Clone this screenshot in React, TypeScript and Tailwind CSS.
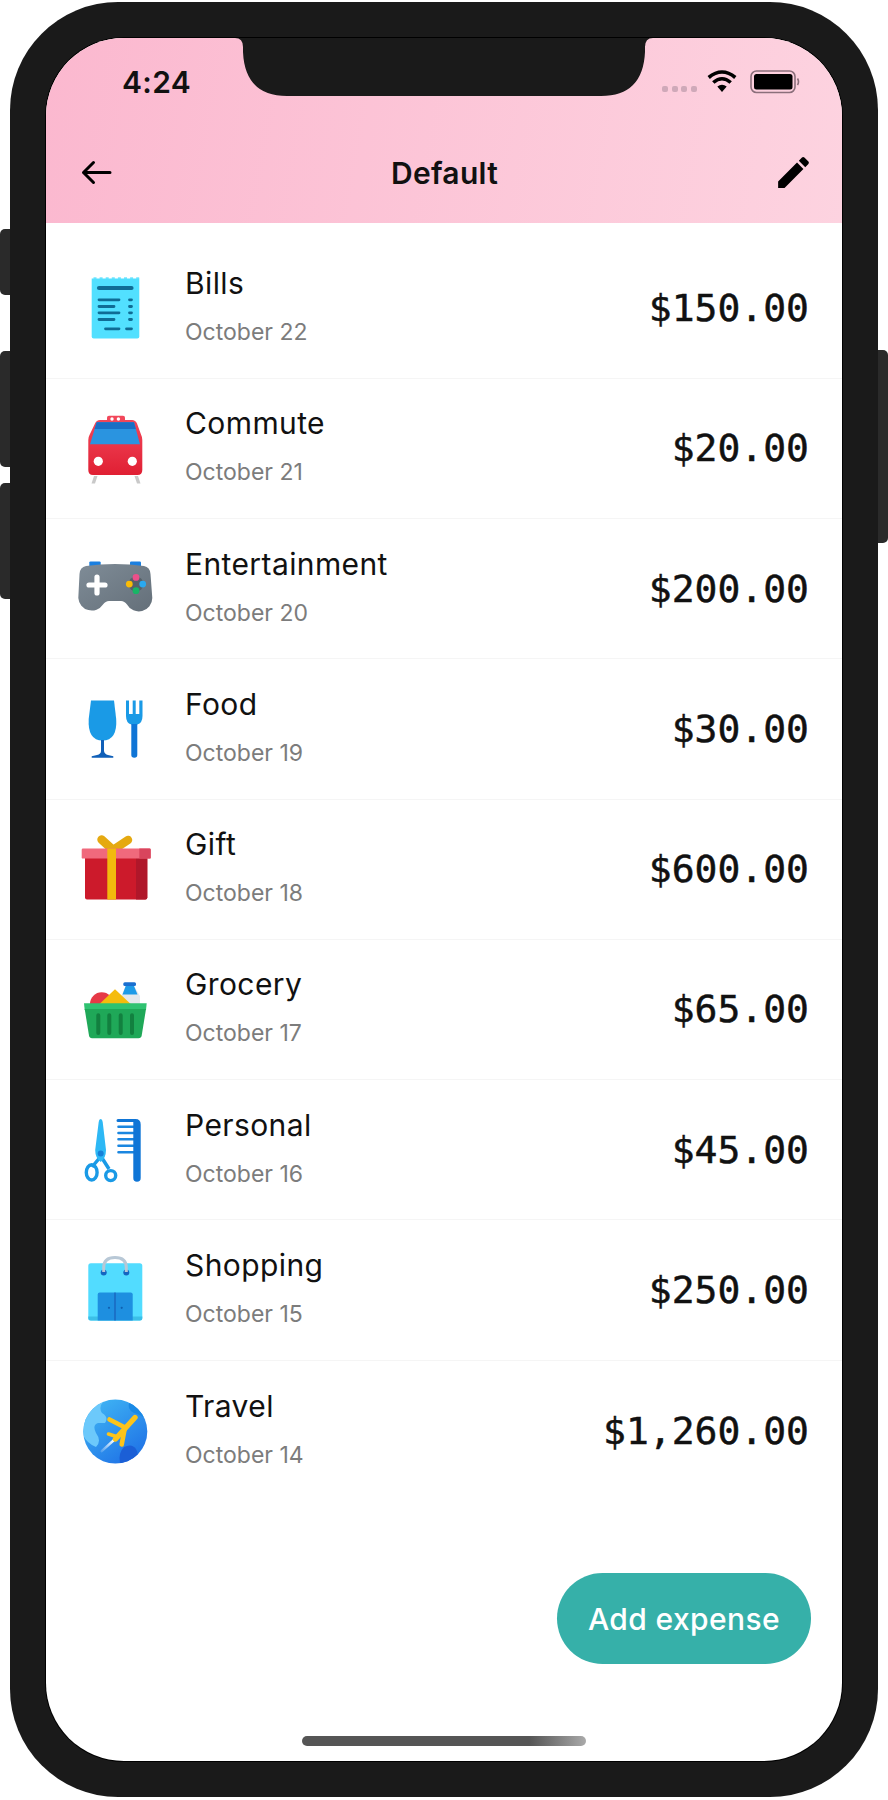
import type { ReactNode } from 'react'

function Slot({ children }: { children: ReactNode }) {
  return (
    <svg width="76" height="76" viewBox="0 0 76 76" className="shrink-0 overflow-visible">
      {children}
    </svg>
  )
}

function BillsIcon() {
  const teeth = [0, 1, 2, 3, 4, 5, 6, 7]
  return (
    <Slot>
      <path d="M13.7 8.5H61.3V66.5Q61.3 68.5 59.3 68.5H15.7Q13.7 68.5 13.7 66.5Z" fill="#52e0ff" />
      {teeth.map((t) => (
        <rect key={t} x={15.5 + t * 6.1} y="7.4" width="3" height="1.4" fill="#52e0ff" />
      ))}
      <g stroke="#0f6c95" strokeWidth="2.8" strokeLinecap="round">
        <path d="M21 18H53.5" strokeWidth="4.2" />
        <path d="M21 29.8H41M21 36.5H36M21 42.8H41M21 49.5H36" />
        <path d="M51.5 29.8H53.5M51.5 36.5H53.5M51.5 42.8H53.5M51.5 49.5H53.5" />
        <path d="M27.5 58.8H41M48.5 58.8H53.5" />
      </g>
    </Slot>
  )
}

function CommuteIcon() {
  return (
    <Slot>
      <defs>
        <linearGradient id="train" x1="0" y1="0" x2="0" y2="1">
          <stop offset="0" stopColor="#f2475a" />
          <stop offset="1" stopColor="#e01f33" />
        </linearGradient>
      </defs>
      <path d="M16 66L13.5 73.5H17L19.5 66ZM60 66L62.5 73.5H59L56.5 66Z" fill="#c9c9c9" />
      <path d="M29 10V7.5Q29 5.7 31 5.7H45Q47 5.7 47 7.5V10Z" fill="#f2475a" />
      <path d="M10.3 30Q10.3 27 11.5 25L17 13.5Q18.5 10 22 10H54Q57.5 10 59 13.5L63.2 25Q64.3 27 64.3 30V60Q64.3 65 59.5 65H15Q10.3 65 10.3 60Z" fill="url(#train)" />
      <path d="M18.7 12.3H56L62 34.3H12Z" fill="#2a94e0" />
      <path d="M18.7 12.3H56L57.9 19H16.6Z" fill="#1a6fc4" />
      <circle cx="34" cy="9" r="1.7" fill="#fff" />
      <circle cx="40.4" cy="9" r="1.7" fill="#fff" />
      <circle cx="20.3" cy="51.3" r="4.6" fill="#fff" />
      <circle cx="54.3" cy="51.3" r="4.6" fill="#fff" />
    </Slot>
  )
}

function GameIcon() {
  return (
    <Slot>
      <defs>
        <linearGradient id="pad" x1="0" y1="0" x2="1" y2="1">
          <stop offset="0" stopColor="#7f8c97" />
          <stop offset="1" stopColor="#646f79" />
        </linearGradient>
      </defs>
      <rect x="11.3" y="10.4" width="11.4" height="6" rx="1.2" fill="#1a7fe0" />
      <rect x="52" y="10.4" width="11" height="6" rx="1.2" fill="#1a7fe0" />
      <path d="M8 15Q37 11 66 15Q72 16 72.5 23L74.3 47A13.5 13.5 0 0 1 49 53.5Q46.5 50 43 50H31Q27.5 50 25 53.5A13.5 13.5 0 0 1 0.3 47L1.5 23Q2 16 8 15Z" fill="url(#pad)" />
      <path d="M19 26V42M11 34H27" stroke="#fff" strokeWidth="5.2" strokeLinecap="round" />
      <circle cx="58" cy="33" r="7.5" fill="#56616a" />
      <circle cx="58" cy="26.4" r="3.4" fill="#ec4f8a" />
      <circle cx="51.3" cy="33.1" r="3.4" fill="#fbbc05" />
      <circle cx="64.7" cy="33.1" r="3.4" fill="#29a9f0" />
      <circle cx="58" cy="39.7" r="3.4" fill="#18b566" />
    </Slot>
  )
}

function FoodIcon() {
  return (
    <Slot>
      <path d="M13 9.5H36L38.2 28Q39.5 49.5 24.5 49.5Q9.5 49.5 10.7 28Z" fill="#1a9ae6" />
      <path d="M23 49H26V60Q26.5 63 30 64L35.3 65.2V66.8H13.7V65.2L19 64Q23 63 23 60Z" fill="#0f5fb8" />
      <path d="M48 9.5H51V23H54.7V9.5H57.7V23H61.3V9.5H64.5V25Q64.5 32 59.3 33.5H53.3Q48 32 48 25Z" fill="#1a9ae6" />
      <path d="M53.3 33H59.3L59.3 64Q59.3 66.8 56.3 66.8Q53.3 66.8 53.3 64Z" fill="#0f75d6" />
    </Slot>
  )
}

function GiftIcon() {
  return (
    <Slot>
      <path d="M35 19L23.5 8.5M35 19L50 9" stroke="#e5a910" strokeWidth="8.5" strokeLinecap="round" />
      <path d="M7 27H69.3V66.6Q69.3 68.6 67.3 68.6H9Q7 68.6 7 66.6Z" fill="#cc1a2b" />
      <path d="M58 27H69.3V66.6Q69.3 68.6 67.3 68.6H58Z" fill="#b0172a" />
      <rect x="3.7" y="17.6" width="69" height="10" rx="1.2" fill="#f0697c" />
      <path d="M61.3 17.6H71.5Q72.7 17.6 72.7 18.8V26.4Q72.7 27.6 71.5 27.6H61.3Z" fill="#d9455d" />
      <rect x="29.3" y="17.6" width="8.7" height="51" fill="#f2b90d" />
    </Slot>
  )
}

function GroceryIcon() {
  return (
    <Slot>
      <circle cx="23.7" cy="33" r="11.7" fill="#e63946" />
      <path d="M47.7 15H56L62 25V34H43.7V24Z" fill="#e4e8ec" />
      <path d="M47.7 15H56L59.5 23.5H44.5Z" fill="#1e9be8" />
      <rect x="45.3" y="11.3" width="12.7" height="3.8" rx="1.5" fill="#1a6fd0" />
      <path d="M37 18.3L52.7 33H21.5Z" fill="#f5bc0c" />
      <path d="M6 32.3H68.7L68 39H6.7Z" fill="#2fc271" />
      <path d="M6.7 38H68L63.7 64.5Q63.2 67.3 60.5 67.3H14Q11.5 67.3 11 64.5Z" fill="#1fa858" />
      <g stroke="#12803f" strokeWidth="4" strokeLinecap="round">
        <path d="M20.3 44.3V62M31.3 44.3V62M42.7 44.3V62M54 44.3V62" />
      </g>
    </Slot>
  )
}

function PersonalIcon() {
  return (
    <Slot>
      <path d="M21.5 46L14 55M24 46L31 57" stroke="#1a9ae6" strokeWidth="3.5" />
      <ellipse cx="13.7" cy="60.4" rx="5.4" ry="7.6" fill="none" stroke="#1a9ae6" strokeWidth="3.4" />
      <circle cx="32.7" cy="63.6" r="5" fill="none" stroke="#1a9ae6" strokeWidth="3.4" />
      <path d="M22.7 7Q24.3 7 24.7 10L28 38Q28 46 22.7 50Q17.2 46 17.2 38L20.7 10Q21 7 22.7 7Z" fill="#2db8f5" />
      <circle cx="22.7" cy="41.4" r="3" fill="#1580d8" />
      <path d="M40.5 14.7H55.5M40.5 21H55.5M40.5 27.3H55.5M40.5 33.7H55.5M40.5 40.3H55.5" stroke="#1a86e0" strokeWidth="2.6" strokeLinecap="round" />
      <path d="M40 7H57.5Q62.7 7 62.7 12.5V66Q62.7 69.8 59 69.8Q55.3 69.8 55.3 66V10H40Q38.5 10 38.5 8.5Q38.5 7 40 7Z" fill="#0f75d6" />
    </Slot>
  )
}

function ShoppingIcon() {
  return (
    <Slot>
      <rect x="10.3" y="11.2" width="54" height="57.3" rx="2.5" fill="#52dcff" />
      <path d="M10.3 64.5H64.3V66Q64.3 68.5 61.8 68.5H12.8Q10.3 68.5 10.3 66Z" fill="#3bbfe8" />
      <path d="M19.7 42.5Q19.7 40.5 21.7 40.5H52.7Q54.7 40.5 54.7 42.5V68.5H19.7Z" fill="#1e8fe0" />
      <rect x="36.4" y="40.5" width="1.2" height="28" fill="#1a5fb8" />
      <circle cx="31" cy="55.8" r="1.1" fill="#1060b0" />
      <circle cx="43.7" cy="55.8" r="1.1" fill="#1060b0" />
      <circle cx="25.7" cy="20.6" r="3" fill="#1565c0" />
      <circle cx="48.3" cy="20.6" r="3" fill="#1565c0" />
      <path d="M25.7 20V15.5Q25.7 5.5 37 5.5Q48.3 5.5 48.3 15.5V20" fill="none" stroke="#b8c8d6" strokeWidth="3" />
    </Slot>
  )
}

function TravelIcon() {
  return (
    <Slot>
      <defs>
        <linearGradient id="globe" x1="0.15" y1="0.05" x2="0.8" y2="0.95">
          <stop offset="0" stopColor="#3fb4f4" />
          <stop offset="1" stopColor="#1f72e6" />
        </linearGradient>
        <clipPath id="earth">
          <circle cx="37.3" cy="38.6" r="32" />
        </clipPath>
        <linearGradient id="trail" x1="0" y1="1" x2="1" y2="0">
          <stop offset="0" stopColor="#fff" stopOpacity="0.2" />
          <stop offset="1" stopColor="#fff" />
        </linearGradient>
      </defs>
      <circle cx="37.3" cy="38.6" r="32" fill="url(#globe)" />
      <g clipPath="url(#earth)">
        <path d="M5 22Q12 18 18 8L26 8Q20 14 24 20Q31 24 27 30L20 30Q14 32 18 40Q24 48 18 54Q8 50 4 40Z" fill="#6cc9fb" />
        <path d="M42 70Q40 60 46 54Q54 50 58 56Q62 62 56 70Z" fill="#1b5fd6" />
        <path d="M52 8Q48 16 56 20Q64 22 70 28L70 10Z" fill="#1a8ae6" />
      </g>
      <path d="M23.7 58.2L36 47" stroke="url(#trail)" strokeWidth="2.4" strokeLinecap="round" />
      <g stroke="#fcc419" strokeLinecap="round" fill="none">
        <path d="M57 24.5L37.5 46" strokeWidth="5.4" />
        <path d="M31.5 26.5L47 34.5" strokeWidth="4.6" />
        <path d="M47 34L43.7 51.5" strokeWidth="4.6" />
        <path d="M30.5 41L40 44" strokeWidth="3.6" />
      </g>
    </Slot>
  )
}

const rows = [
  { name: 'Bills', date: 'October 22', amount: '$150.00', icon: <BillsIcon /> },
  { name: 'Commute', date: 'October 21', amount: '$20.00', icon: <CommuteIcon /> },
  { name: 'Entertainment', date: 'October 20', amount: '$200.00', icon: <GameIcon /> },
  { name: 'Food', date: 'October 19', amount: '$30.00', icon: <FoodIcon /> },
  { name: 'Gift', date: 'October 18', amount: '$600.00', icon: <GiftIcon /> },
  { name: 'Grocery', date: 'October 17', amount: '$65.00', icon: <GroceryIcon /> },
  { name: 'Personal', date: 'October 16', amount: '$45.00', icon: <PersonalIcon /> },
  { name: 'Shopping', date: 'October 15', amount: '$250.00', icon: <ShoppingIcon /> },
  { name: 'Travel', date: 'October 14', amount: '$1,260.00', icon: <TravelIcon /> },
]

export default function App() {
  return (
    <div className="relative h-[1800px] w-[888px] overflow-hidden bg-white pl-[10px] pt-[2px] font-['Inter',sans-serif]">
      {/* side buttons */}
      <div className="absolute left-0 top-[229px] h-[66px] w-[12px] rounded-l-[5px] bg-[#2a2a2a]" />
      <div className="absolute left-0 top-[351px] h-[116px] w-[12px] rounded-l-[5px] bg-[#2a2a2a]" />
      <div className="absolute left-0 top-[483px] h-[116px] w-[12px] rounded-l-[5px] bg-[#2a2a2a]" />
      <div className="absolute right-0 top-[350px] h-[193px] w-[12px] rounded-r-[5px] bg-[#2a2a2a]" />

      <div className="relative h-[1795px] w-[868px] rounded-[108px] bg-[#1a1a1a] p-[36px]">
        <div className="relative flex h-full w-full flex-col overflow-hidden rounded-[78px] bg-white shadow-[0_0_0_1px_#000]">
          <svg width="418" height="59" viewBox="0 0 418 59" className="absolute left-[189px] top-0">
            <path
              d="M0 0Q8 0 8 9V14Q10 58 52 58H366Q408 58 410 14V9Q410 0 418 0Z"
              fill="#1a1a1a"
            />
          </svg>

          <header className="h-[185px] shrink-0 bg-linear-100 from-[#fbb8cf] to-[#fdd3e0]">
            <div className="flex h-[97px] items-start justify-between pl-[76px] pr-[42px] pt-[27px]">
              <span className="text-[30px] font-semibold leading-[34px] tracking-[0.3px] text-[#111]">4:24</span>
              <div className="flex items-start">
                <div className="mr-[10px] mt-[21px] flex gap-[3.7px]">
                  <div className="h-[6px] w-[6px] rounded-[2px] bg-[#cfa9b9]" />
                  <div className="h-[6px] w-[6px] rounded-[2px] bg-[#cfa9b9]" />
                  <div className="h-[6px] w-[6px] rounded-[2px] bg-[#cfa9b9]" />
                  <div className="h-[6px] w-[6px] rounded-[2px] bg-[#cfa9b9]" />
                </div>
                <svg width="30" height="24" viewBox="0 0 30 24" className="mr-[13px] mt-[4px]">
                  <path d="M1.7 8.5Q15 -2.5 28.3 8.5M6.3 13.5Q15 6 23.7 13.5" fill="none" stroke="#000" strokeWidth="3.6" />
                  <path d="M10.3 17.5Q15 14 19.7 17.5L15 23Z" fill="#000" />
                </svg>
                <svg width="50" height="24" viewBox="0 0 50 24" className="mt-[5px]">
                  <rect x="1" y="1" width="44" height="21.5" rx="5.5" fill="none" stroke="#8b6f7b" strokeWidth="1.6" />
                  <rect x="4" y="4" width="38.5" height="15.5" rx="2.5" fill="#000" />
                  <path d="M47.5 8.5Q49.5 11.7 47.5 15" fill="none" stroke="#8b6f7b" strokeWidth="1.6" />
                </svg>
              </div>
            </div>
            <div className="flex h-[76px] items-center justify-between pl-[29px] pr-[28px]">
              <svg width="41" height="41" viewBox="0 0 41 41" className="-mt-[1px]">
                <path d="M35 20.5H8.5M18.5 10.5L8.5 20.5L18.5 30.5" fill="none" stroke="#000" strokeWidth="3" strokeLinecap="round" strokeLinejoin="round" />
              </svg>
              <span className="text-[30px] font-semibold leading-[34px] tracking-[0.3px] text-[#111]">Default</span>
              <svg width="41" height="41" viewBox="0 0 24 24" className="-mt-[1px]">
                <path
                  d="M3 17.25V21h3.75L17.81 9.94l-3.75-3.75L3 17.25zM20.71 7.04c.39-.39.39-1.02 0-1.41l-2.34-2.34c-.39-.39-1.02-.39-1.41 0l-1.83 1.83 3.75 3.75 1.83-1.83z"
                  fill="#000"
                />
              </svg>
            </div>
          </header>

          <ul className="pt-[15.5px]">
            {rows.map((row, i) => (
              <li
                key={row.name}
                className={`flex h-[140.25px] items-center pl-[32px] pr-[33px] ${
                  i < rows.length - 1 ? 'border-b border-[#f5f5f5]' : ''
                }`}
              >
                {row.icon}
                <div className="ml-[31px] flex flex-1 flex-col pb-[4px]">
                  <span className="text-[30px] leading-[36px] tracking-[0.4px] text-[#111]">{row.name}</span>
                  <span className="mt-[16px] text-[23px] leading-[30px] text-[#7c7c7c]">{row.date}</span>
                </div>
                <span className="font-['DejaVu_Sans_Mono',monospace] text-[38px] leading-none text-[#111] [-webkit-text-stroke:0.5px_#111]">
                  {row.amount}
                </span>
              </li>
            ))}
          </ul>

          <button className="ml-auto mr-[31px] mt-[72px] flex h-[91px] w-[254px] items-center justify-center rounded-full bg-[#36b0a9] pt-[2px] text-[30px] font-medium tracking-[0.4px] text-white">
            Add expense
          </button>

          <div className="mx-auto mt-[72px] h-[10px] w-[284px] rounded-full bg-linear-to-r from-[#555] from-80% to-[#aaa]" />
        </div>
      </div>
    </div>
  )
}
